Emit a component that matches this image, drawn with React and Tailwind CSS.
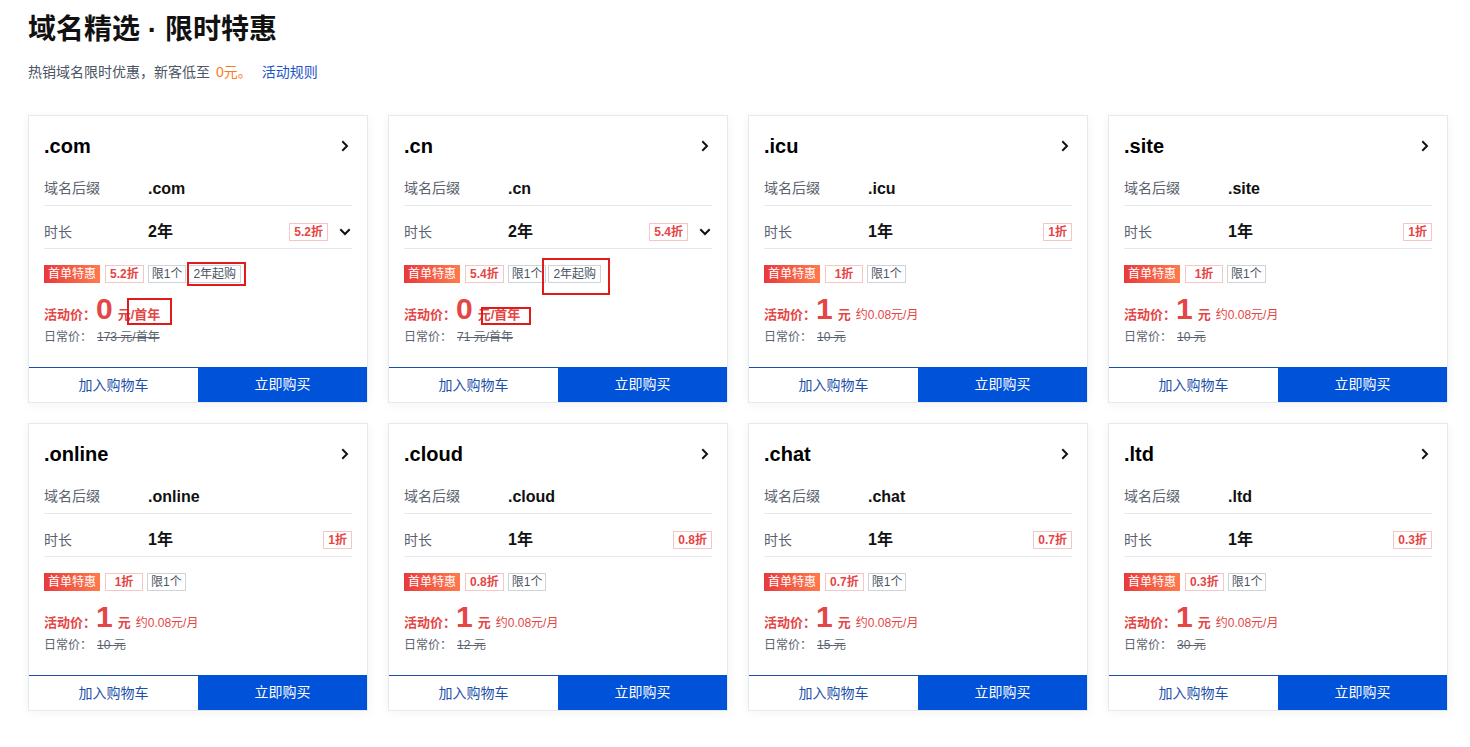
import React from "react";

const FONT = { fontFamily: '"Liberation Sans", "Noto Sans CJK SC", sans-serif' };

// suffix cards on the promo page
const domains = [
  { suffix: ".com", years: "2年", off: "5.2折", select: true, minBuy: "2年起购", price: "0", unit: "元/首年", regular: "173 元/首年", marks: "com" },
  { suffix: ".cn", years: "2年", off: "5.4折", select: true, minBuy: "2年起购", price: "0", unit: "元/首年", regular: "71 元/首年", marks: "cn" },
  { suffix: ".icu", years: "1年", off: "1折", price: "1", unit: "元", monthly: "约0.08元/月", regular: "10 元" },
  { suffix: ".site", years: "1年", off: "1折", price: "1", unit: "元", monthly: "约0.08元/月", regular: "10 元" },
  { suffix: ".online", years: "1年", off: "1折", price: "1", unit: "元", monthly: "约0.08元/月", regular: "10 元" },
  { suffix: ".cloud", years: "1年", off: "0.8折", price: "1", unit: "元", monthly: "约0.08元/月", regular: "12 元" },
  { suffix: ".chat", years: "1年", off: "0.7折", price: "1", unit: "元", monthly: "约0.08元/月", regular: "15 元" },
  { suffix: ".ltd", years: "1年", off: "0.3折", price: "1", unit: "元", monthly: "约0.08元/月", regular: "30 元" },
];

function ChevronRight() {
  return (
    <svg width="14" height="14" viewBox="0 0 14 14" fill="none">
      <path d="M5 3l4 4-4 4" stroke="#111" strokeWidth="2" strokeLinecap="square" />
    </svg>
  );
}

function ChevronDown() {
  return (
    <svg width="14" height="14" viewBox="0 0 14 14" fill="none">
      <path d="M3 5l4 4 4-4" stroke="#111" strokeWidth="2" strokeLinecap="square" />
    </svg>
  );
}

function DomainCard({ d }) {
  return (
    <div className="relative flex h-[288px] flex-col border border-[#e6e9ef] bg-white shadow-[0_2px_10px_rgba(30,40,60,0.05)]">
      <div className="px-[15px]">
        <div className="flex items-center justify-between pb-[4px] pt-[17px]">
          <span className="text-[20px] font-bold leading-[26px] text-black">{d.suffix}</span>
          <ChevronRight />
        </div>

        <div className="flex h-[43px] items-center border-b border-[#e5e7eb] pt-[9px]">
          <span className="w-[104px] text-[14px] text-[#5c6370]">域名后缀</span>
          <span className="text-[16px] font-bold text-[#111]">{d.suffix}</span>
        </div>

        <div className="flex h-[43px] items-center border-b border-[#e5e7eb] pt-[9px]">
          <span className="w-[104px] pt-[2px] text-[14px] text-[#5c6370]">时长</span>
          <span className="text-[16px] font-bold text-[#111]">{d.years}</span>
          <span className="ml-auto flex h-[18px] items-center border border-[#f5c6c6] px-[4px] text-[12px] font-bold text-[#e54545]">
            {d.off}
          </span>
          {d.select && (
            <span className="ml-[10px] flex">
              <ChevronDown />
            </span>
          )}
        </div>

        <div className="mt-[16px] flex h-[18px] items-center gap-[5px] text-[12px]">
          <span className="flex h-[18px] items-center bg-gradient-to-r from-[#e8383d] to-[#ff7a4d] px-[4px] text-white">
            首单特惠
          </span>
          <span className="flex h-[18px] min-w-[38px] items-center justify-center border border-[#f5c6c6] px-[4px] font-bold text-[#e54545]">
            {d.off}
          </span>
          <span className="-ml-[1px] flex h-[18px] items-center border border-[#cfd3da] px-[3px] text-[#4b5563]">限1个</span>
          {d.minBuy && (
            <span className="-ml-[3px] flex h-[18px] items-center border border-[#cfd3da] px-[4px] text-[#4b5563]">
              {d.minBuy}
            </span>
          )}
        </div>

        <div className="mt-[11px] flex h-[30px] items-baseline text-[#e54545]">
          <span className="text-[13px] font-bold">活动价：</span>
          <span className="text-[30px] font-bold leading-[30px]">{d.price}</span>
          <span className="ml-[5px] text-[13px] font-bold">{d.unit}</span>
          {d.monthly && <span className="ml-[5px] text-[12px]">{d.monthly}</span>}
        </div>

        <div className="mt-[4px] flex h-[18px] items-center text-[12px] text-[#5c6370]">
          <span>日常价：</span>
          <span className="ml-[5px] line-through">{d.regular}</span>
        </div>
      </div>

      <div className="mt-auto flex h-[35px] text-[14px]">
        <button className="flex-1 border-t border-[#1d4fa8] text-[#1d4fa8]">加入购物车</button>
        <button className="flex-1 bg-[#0052d9] text-white">立即购买</button>
      </div>

      {/* highlight boxes on the first two cards */}
      {d.marks === "com" && (
        <>
          <div className="absolute left-[158px] top-[146px] h-[24px] w-[59px] border-2 border-[#e01b1b]" />
          <div className="absolute left-[98px] top-[182px] h-[27px] w-[45px] border-2 border-[#e01b1b]" />
        </>
      )}
      {d.marks === "cn" && (
        <>
          <div className="absolute left-[153px] top-[142px] h-[37px] w-[68px] border-2 border-[#e01b1b]" />
          <div className="absolute left-[92px] top-[191px] h-[18px] w-[50px] border-2 border-[#e01b1b]" />
        </>
      )}
    </div>
  );
}

export default function App() {
  return (
    <div className="min-h-screen bg-white px-[28px] pt-[10px]" style={FONT}>
      <h1 className="text-[28px] font-bold leading-[40px] text-[#111]">域名精选 · 限时特惠</h1>
      <p className="mt-[12px] text-[14px] leading-[20px] text-[#4b5563]">
        热销域名限时优惠，新客低至 <span className="ml-[2px] text-[#ff7a1a]">0元。</span>
        <a className="ml-[10px] text-[#1d56c7]">活动规则</a>
      </p>

      <div className="mt-[33px] grid w-[1420px] grid-cols-4 gap-x-[20px] gap-y-[20px]">
        {domains.map((d) => (
          <DomainCard key={d.suffix} d={d} />
        ))}
      </div>
    </div>
  );
}
